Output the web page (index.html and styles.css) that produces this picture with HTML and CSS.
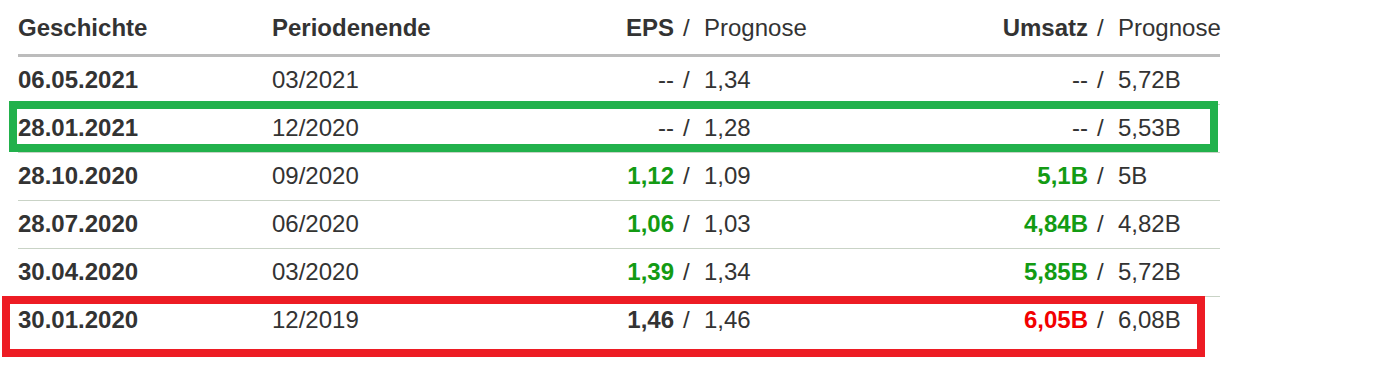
FILE: index.html
```html
<!DOCTYPE html>
<html lang="de">
<head>
<meta charset="utf-8">
<title>Geschichte</title>
<link rel="stylesheet" href="styles.css">
</head>
<body>
<div class="wrap">
  <div class="tbl">
    <div class="row head">
      <div class="c1">Geschichte</div>
      <div class="c2">Periodenende</div>
      <div class="l b">EPS</div>
      <div class="s">/</div>
      <div class="r">Prognose</div>
      <div class="l b">Umsatz</div>
      <div class="s">/</div>
      <div class="r">Prognose</div>
    </div>
    <div class="row">
      <div class="c1 b">06.05.2021</div>
      <div class="c2">03/2021</div>
      <div class="l">--</div><div class="s">/</div><div class="r">1,34</div>
      <div class="l">--</div><div class="s">/</div><div class="r">5,72B</div>
    </div>
    <div class="row">
      <div class="c1 b">28.01.2021</div>
      <div class="c2">12/2020</div>
      <div class="l">--</div><div class="s">/</div><div class="r">1,28</div>
      <div class="l">--</div><div class="s">/</div><div class="r">5,53B</div>
    </div>
    <div class="row">
      <div class="c1 b">28.10.2020</div>
      <div class="c2">09/2020</div>
      <div class="l b up">1,12</div><div class="s">/</div><div class="r">1,09</div>
      <div class="l b up">5,1B</div><div class="s">/</div><div class="r">5B</div>
    </div>
    <div class="row">
      <div class="c1 b">28.07.2020</div>
      <div class="c2">06/2020</div>
      <div class="l b up">1,06</div><div class="s">/</div><div class="r">1,03</div>
      <div class="l b up">4,84B</div><div class="s">/</div><div class="r">4,82B</div>
    </div>
    <div class="row">
      <div class="c1 b">30.04.2020</div>
      <div class="c2">03/2020</div>
      <div class="l b up">1,39</div><div class="s">/</div><div class="r">1,34</div>
      <div class="l b up">5,85B</div><div class="s">/</div><div class="r">5,72B</div>
    </div>
    <div class="row last">
      <div class="c1 b">30.01.2020</div>
      <div class="c2">12/2019</div>
      <div class="l b">1,46</div><div class="s">/</div><div class="r">1,46</div>
      <div class="l b down">6,05B</div><div class="s">/</div><div class="r">6,08B</div>
    </div>
  </div>
  <div class="mark mark-green"></div>
  <div class="mark mark-red"></div>
</div>
</body>
</html>
```
FILE: styles.css
```css
html, body {
  margin: 0;
  padding: 0;
  background: #fff;
}
body {
  font-family: "Liberation Sans", Arial, sans-serif;
  font-size: 24px;
  line-height: 28px;
  color: #333;
}
.wrap {
  position: relative;
  padding-left: 18px;
  height: 381px;
  box-sizing: border-box;
}
.tbl {
  width: 1202px;
}
.row {
  display: grid;
  grid-template-columns: 254px 200px 202px 30px 176px 208px 30px 102px;
  padding: 9px 0 10px;
  border-bottom: 1px solid #c9d3c6;
  white-space: nowrap;
}
.row.head {
  padding: 14px 0 12px;
  border-bottom: 3px solid #bcbcbc;
}
.row.last {
  border-bottom: none;
}
.head .c1, .head .c2 {
  font-weight: bold;
}
.b {
  font-weight: bold;
}
.l {
  text-align: right;
}
.s {
  padding-left: 9px;
}
.r {
  text-align: left;
}
.up {
  color: #139b13;
}
.down {
  color: #f20000;
}
.mark {
  position: absolute;
  box-sizing: border-box;
  border-width: 8px;
  border-style: solid;
}
.mark-green {
  left: 9px;
  top: 101px;
  width: 1209px;
  height: 51px;
  border-color: #22b14c;
}
.mark-red {
  left: 2px;
  top: 296px;
  width: 1203px;
  height: 61px;
  border-color: #ed1c24;
}
```
